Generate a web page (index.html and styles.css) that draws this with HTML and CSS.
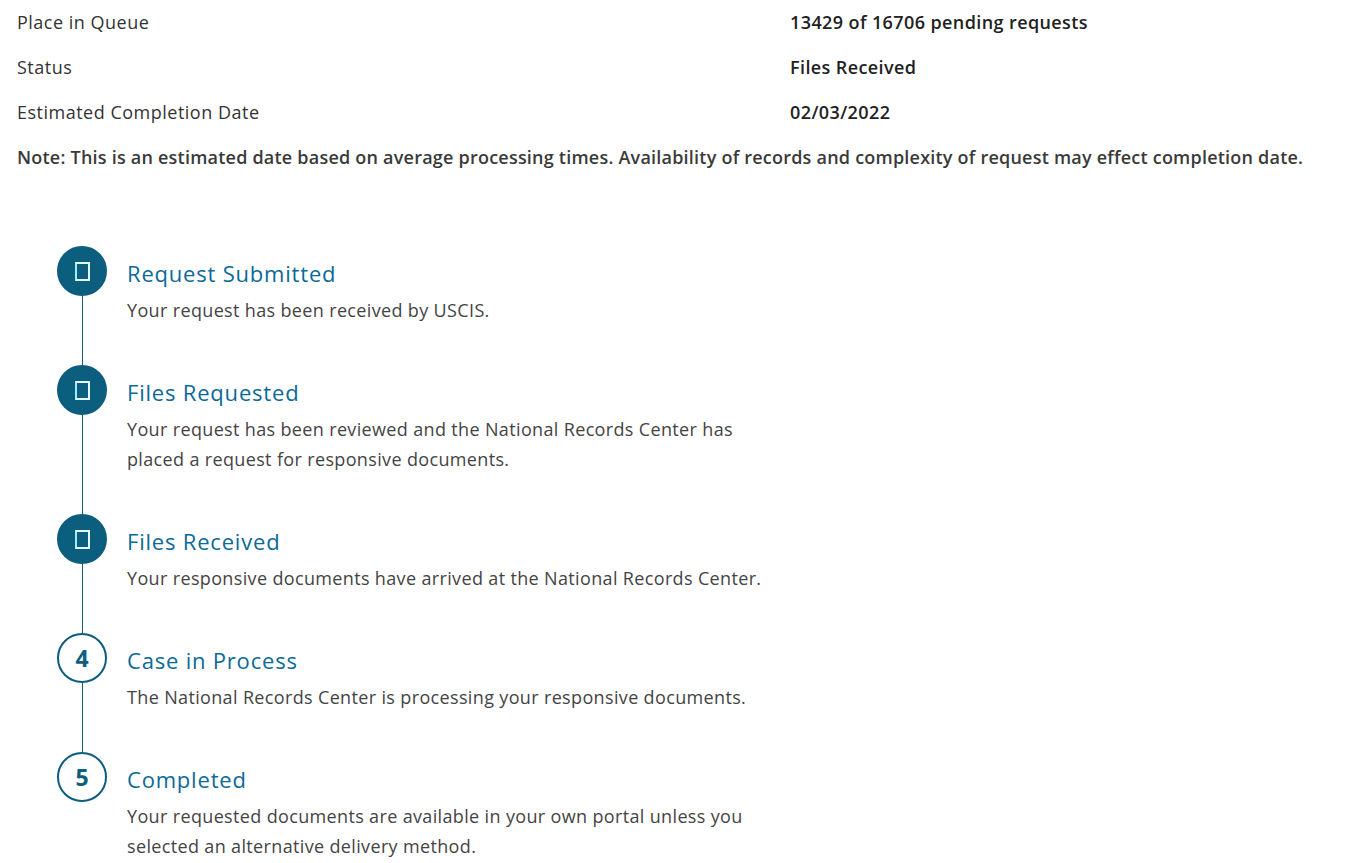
FILE: index.html
```html
<!DOCTYPE html>
<html lang="en">
<head>
  <meta charset="UTF-8">
  <meta name="viewport" content="width=device-width, initial-scale=1.0">
  <title>Request status</title>
  <link rel="stylesheet" href="styles.css">
</head>
<body>
  <div class="page">
    <dl class="summary">
      <div class="summary-row">
        <dt>Place in Queue</dt>
        <dd>13429 of 16706 pending requests</dd>
      </div>
      <div class="summary-row">
        <dt>Status</dt>
        <dd>Files Received</dd>
      </div>
      <div class="summary-row">
        <dt>Estimated Completion Date</dt>
        <dd>02/03/2022</dd>
      </div>
    </dl>
    <p class="note">Note: This is an estimated date based on average processing times. Availability of records and complexity of request may effect completion date.</p>

    <ol class="timeline">
      <li class="step done">
        <div class="marker"><span class="circle"><span class="glyph"></span></span><span class="line"></span></div>
        <div class="step-body">
          <h3>Request Submitted</h3>
          <p>Your request has been received by USCIS.</p>
        </div>
      </li>
      <li class="step done">
        <div class="marker"><span class="circle"><span class="glyph"></span></span><span class="line"></span></div>
        <div class="step-body">
          <h3>Files Requested</h3>
          <p>Your request has been reviewed and the National Records Center has<br>placed a request for responsive documents.</p>
        </div>
      </li>
      <li class="step done">
        <div class="marker"><span class="circle"><span class="glyph"></span></span><span class="line"></span></div>
        <div class="step-body">
          <h3>Files Received</h3>
          <p>Your responsive documents have arrived at the National Records Center.</p>
        </div>
      </li>
      <li class="step">
        <div class="marker"><span class="circle">4</span><span class="line"></span></div>
        <div class="step-body">
          <h3>Case in Process</h3>
          <p>The National Records Center is processing your responsive documents.</p>
        </div>
      </li>
      <li class="step last">
        <div class="marker"><span class="circle">5</span></div>
        <div class="step-body">
          <h3>Completed</h3>
          <p>Your requested documents are available in your own portal unless you<br>selected an alternative delivery method.</p>
        </div>
      </li>
    </ol>
  </div>
</body>
</html>
```

FILE: styles.css
```css
body {
  margin: 0;
  font-family: "Open Sans", Lato, Arial, sans-serif;
  font-size: 18px;
  letter-spacing: 0.5px;
  color: #333;
  background: #fff;
}
.page {
  padding: 0 17px;
}
.summary {
  margin: 0;
}
.summary-row {
  display: grid;
  grid-template-columns: 773px 1fr;
  height: 45px;
  line-height: 44px;
}
.summary-row dt {
  color: #333;
}
.summary-row dd {
  margin: 0;
  font-weight: 600;
  letter-spacing: 0.4px;
  color: #222;
}
.note {
  margin: 0;
  height: 45px;
  line-height: 44px;
  font-weight: 600;
  letter-spacing: 0.22px;
  color: #3a3a3a;
}
.timeline {
  list-style: none;
  margin: 66px 0 0;
  padding: 0 0 0 40px;
}
.step {
  display: flex;
  gap: 20px;
}
.marker {
  width: 50px;
  display: flex;
  flex-direction: column;
  align-items: center;
  flex-shrink: 0;
}
.circle {
  box-sizing: border-box;
  width: 50px;
  height: 50px;
  border-radius: 50%;
  border: 2px solid #0b5e7d;
  display: flex;
  align-items: center;
  justify-content: center;
  font-weight: bold;
  font-size: 23px;
  letter-spacing: 0;
  color: #0b5e7d;
  background: #fff;
}
.done .circle {
  background: #0b5e7d;
}
.glyph {
  width: 11px;
  height: 15px;
  border: 2px solid #e6f8ff;
  border-left-color: #9ff0ff;
}
.line {
  flex: 1;
  width: 1px;
  background: #0b5e7d;
}
.step-body {
  padding-bottom: 40px;
}
.step-body h3 {
  margin: 12px 0 7px;
  font-size: 22px;
  line-height: 30px;
  font-weight: normal;
  letter-spacing: 0.8px;
  color: #0b6a98;
}
.step-body p {
  margin: 0;
  line-height: 30px;
  letter-spacing: 0.35px;
  color: #444;
}
```
